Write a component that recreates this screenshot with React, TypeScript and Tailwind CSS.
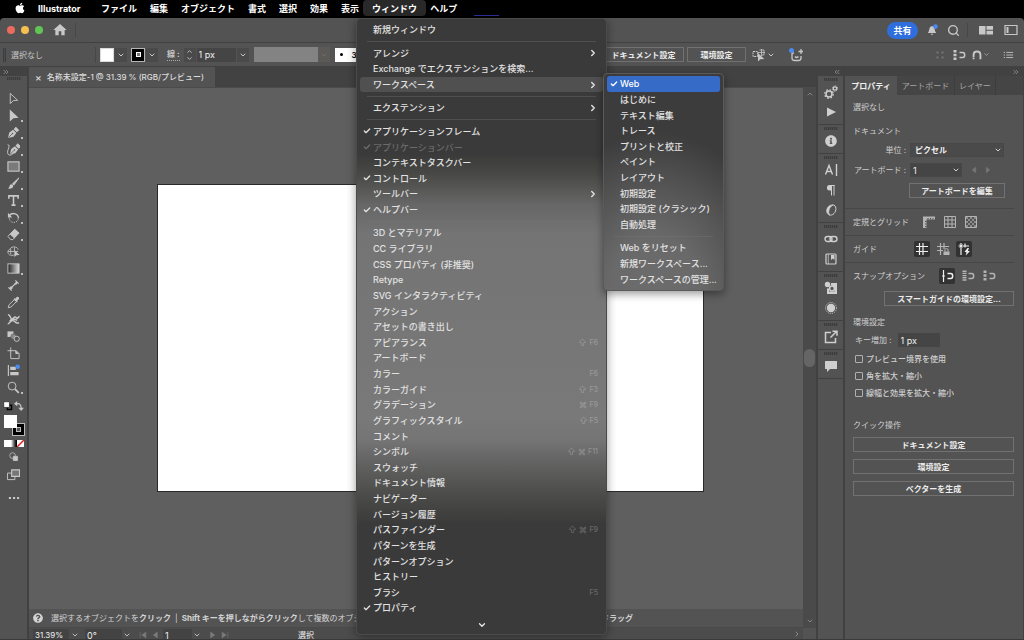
import React from 'react';
import { clsx } from 'clsx';
import {
  ArrowBigUp,
  Check,
  ChevronDown,
  ChevronRight,
  ChevronsLeft,
  ChevronsRight,
  ChevronUp,
  Command,
  Search,
} from 'lucide-react';
import { FaApple, FaInfoCircle, FaQuestionCircle } from 'react-icons/fa';
import { MdHome } from 'react-icons/md';

type MenuEntry = {
  label: string;
  checked?: boolean;
  disabled?: boolean;
  sub?: boolean;
  active?: boolean;
  keys?: string;
};

const menuBarItems = [
  'ファイル',
  '編集',
  'オブジェクト',
  '書式',
  '選択',
  '効果',
  '表示',
  'ウィンドウ',
  'ヘルプ',
];

// null draws a separator
const windowMenu: (MenuEntry | null)[] = [
  { label: '新規ウィンドウ' },
  null,
  { label: 'アレンジ', sub: true },
  { label: 'Exchange でエクステンションを検索...' },
  { label: 'ワークスペース', sub: true, active: true },
  null,
  { label: 'エクステンション', sub: true },
  null,
  { label: 'アプリケーションフレーム', checked: true },
  { label: 'アプリケーションバー', checked: true, disabled: true },
  { label: 'コンテキストタスクバー' },
  { label: 'コントロール', checked: true },
  { label: 'ツールバー', sub: true },
  { label: 'ヘルプバー', checked: true },
  null,
  { label: '3D とマテリアル' },
  { label: 'CC ライブラリ' },
  { label: 'CSS プロパティ (非推奨)' },
  { label: 'Retype' },
  { label: 'SVG インタラクティビティ' },
  { label: 'アクション' },
  { label: 'アセットの書き出し' },
  { label: 'アピアランス', keys: 'S F6' },
  { label: 'アートボード' },
  { label: 'カラー', keys: 'F6' },
  { label: 'カラーガイド', keys: 'S F3' },
  { label: 'グラデーション', keys: 'C F9' },
  { label: 'グラフィックスタイル', keys: 'S F5' },
  { label: 'コメント' },
  { label: 'シンボル', keys: 'S C F11' },
  { label: 'スウォッチ' },
  { label: 'ドキュメント情報' },
  { label: 'ナビゲーター' },
  { label: 'バージョン履歴' },
  { label: 'パスファインダー', keys: 'S C F9' },
  { label: 'パターンを生成' },
  { label: 'パターンオプション' },
  { label: 'ヒストリー' },
  { label: 'ブラシ', keys: 'F5' },
  { label: 'プロパティ', checked: true },
];

const workspaceMenu: (MenuEntry | null)[] = [
  { label: 'Web', checked: true, active: true },
  { label: 'はじめに' },
  { label: 'テキスト編集' },
  { label: 'トレース' },
  { label: 'プリントと校正' },
  { label: 'ペイント' },
  { label: 'レイアウト' },
  { label: '初期設定' },
  { label: '初期設定 (クラシック)' },
  { label: '自動処理' },
  null,
  { label: 'Web をリセット' },
  { label: '新規ワークスペース...' },
  { label: 'ワークスペースの管理...' },
];

interface IconProps {
  children: React.ReactNode;
  className?: string;
}

function Icon({ children, className }: IconProps) {
  return (
    <svg
      viewBox="0 0 14 14"
      fill="none"
      stroke="currentColor"
      className={clsx('shrink-0', className ?? 'size-[14px]')}
      aria-hidden="true"
    >
      {children}
    </svg>
  );
}

const penNib = (
  <>
    <path d="M1 13 2.500 7l4-3L10 7.500l-3 4z" fill="currentColor" stroke="none" />
    <path d="m7.200 3.500 2.300-2.700 3.700 3.700-2.700 2.300z" fill="currentColor" stroke="none" />
    <path d="m1.500 12.500 4-4" stroke="#535353" strokeWidth=".8" />
    <circle cx="6" cy="8" r=".8" fill="#535353" stroke="none" />
  </>
);

const tools: { name: string; more?: boolean; art: React.ReactNode }[] = [
  { name: '選択', art: <path d="M3.500 1.500v11L7 9.200l4.500-.2z" /> },
  {
    name: 'ダイレクト選択',
    more: true,
    art: <path d="M3 .5v13L7 10l5.500-.5z" fill="currentColor" stroke="none" />,
  },
  { name: 'ペン', more: true, art: penNib },
  {
    name: '曲線',
    more: true,
    art: (
      <>
        <g transform="translate(2 -.5)">{penNib}</g>
        <path d="M.6 1.500c2 .5 2 2.500.8 5s-1.200 6 1 6.500 3-.8 4-1.500" />
      </>
    ),
  },
  {
    name: '長方形',
    more: true,
    art: <rect x="1" y="2" width="12" height="10" fill="#7a7a7a" strokeWidth="1.200" />,
  },
  {
    name: 'ブラシ',
    more: true,
    art: (
      <>
        <path d="M12.800 1 6 7.200l1.400 1.500z" fill="currentColor" />
        <path d="M5.500 7.800c-2-.3-2.600 1-2.900 2.400-.2 1-.8 1.800-1.900 2 2.500 1 5.500.5 6.200-2.800z" fill="currentColor" stroke="none" />
      </>
    ),
  },
  {
    name: '文字',
    more: true,
    art: <path d="M2 5V2h10v3M7 2v10M4.800 12h4.400" strokeWidth="1.700" />,
  },
  {
    name: '回転',
    more: true,
    art: (
      <>
        <path d="M2.500 4.800C6 .8 12.500 3 12.300 8" strokeWidth="1.500" />
        <path d="M12 9c-1.400 4.800-9.500 4.500-9.500-1.500" strokeDasharray="1.200 1.200" />
        <path d="M1 2v5h4.600z" fill="currentColor" stroke="none" />
      </>
    ),
  },
  {
    name: '消しゴム',
    more: true,
    art: (
      <>
        <path d="m8.300 1.300 4.700 4.200-5 5.200-4.700-4.200z" fill="currentColor" />
        <path d="M3.300 6.500 1 9l3 3.500h2.300L8 10.700" />
      </>
    ),
  },
  {
    name: 'シェイプ形成',
    art: (
      <>
        <path d="M8 10.500C4 12.500.5 10 1 7c.3-2 2-2 2.500-3 1.500-3 8-2.500 8.500 1M1 7h11M4 4v6M8 2.500V7" strokeWidth=".9" />
        <path d="M8 5.500V13l2-2 3.500-.3z" fill="currentColor" stroke="none" />
      </>
    ),
  },
  {
    name: 'グラデーション',
    more: true,
    art: (
      <>
        <defs>
          <linearGradient id="toolGradient">
            <stop offset="0" stopColor="#222" />
            <stop offset="1" stopColor="#ddd" />
          </linearGradient>
        </defs>
        <rect x="1" y="2" width="12" height="10" fill="url(#toolGradient)" />
      </>
    ),
  },
  {
    name: '寸法',
    art: (
      <>
        <path d="m3.500 10.500 7-7M1.500 9l3.500 3.500M9 1.500 12.500 5" strokeWidth="1.200" />
        <path d="m9 4 1.500 1.500M3.500 8.500 5.500 10.500" strokeWidth="2.500" />
      </>
    ),
  },
  {
    name: 'スポイト',
    art: (
      <>
        <path d="M8 3.800 2.200 9.500l-.9 3.200 3.200-.9L10.200 6" />
        <path d="m7 3.500 3.500 3.500 1-1-.5-.8 1.800-2c.9-1.400-.9-3-2.200-2.100L8.800 2.900 8 2.500z" fill="currentColor" stroke="none" />
      </>
    ),
  },
  {
    name: 'パペットワープ',
    art: (
      <>
        <path d="M1 2c3-.5 2.500 5 4.500 4.500S8 3 10 5s2-1 3.500-1.500" strokeWidth="1.600" />
        <path d="M.8 11.500C3 12 3 8 6 8s2.500 4 7 2.500M3 9c1-2.500 5-3 8-1" strokeWidth="1.600" />
      </>
    ),
  },
  {
    name: 'ブレンド',
    art: (
      <>
        <path d="M.5 1.500h6.500v6H.5z" fill="currentColor" stroke="none" />
        <circle cx="7" cy="7" r="2.800" fill="#8d8d8d" stroke="#6b6b6b" />
        <circle cx="10.500" cy="9.500" r="2.800" fill="#535353" />
      </>
    ),
  },
  {
    name: 'アートボード',
    art: (
      <>
        <path d="M4 .5v12h9V7l-3-3H.5" />
        <path d="M9.500 4v3h3" fill="currentColor" />
      </>
    ),
  },
  {
    name: '整列',
    art: (
      <>
        <path d="M1.500 1v12" strokeWidth="1.200" />
        <path d="M3.500 3h6v3.500h-6zM3.500 8.500h9V12h-9z" fill="currentColor" stroke="none" />
        <circle cx="11.500" cy="3" r="2.500" fill="#4a8af0" stroke="none" />
      </>
    ),
  },
  {
    name: 'ズーム',
    more: true,
    art: (
      <>
        <circle cx="5.500" cy="5.500" r="4.200" />
        <path d="m8.700 8.700 4 4" strokeWidth="1.800" />
      </>
    ),
  },
];

const snapHook = (
  <path d="M7.500 4.500h3.300c2.500 0 2.500 5 0 5H7.500" strokeWidth="1.500" />
);

const dockGroups: { name: string; art: React.ReactNode }[][] = [
  [
    {
      name: 'CSS プロパティ',
      art: (
        <>
          <circle cx="5" cy="9" r="3" strokeWidth="1.500" />
          <circle cx="5" cy="9" r="4.300" strokeWidth="1.200" strokeDasharray="1.700 1.680" />
          <circle cx="11" cy="3.500" r="1.700" strokeWidth="1.200" />
          <circle cx="11" cy="3.500" r="2.600" strokeDasharray="1 1.040" />
        </>
      ),
    },
    { name: 'アクション', art: <path d="m3 2.500 9 4.500-9 4.500z" fill="currentColor" stroke="none" /> },
  ],
  [{ name: '情報', art: <FaInfoCircle size={12} x={1} y={1} stroke="none" /> }],
  [
    {
      name: '文字',
      art: <path d="M1.500 11.500 5 2.500l3.500 9M2.800 8.500h4.500M12.500 1v12" strokeWidth="1.400" />,
    },
    {
      name: '段落',
      art: (
        <>
          <path d="M8 2H5.500C2 2 2 7.500 5.500 7.500H8z" fill="currentColor" stroke="none" />
          <path d="M7.500 2v10.500M10 2v10.500M7 2.500h3.500" />
        </>
      ),
    },
    {
      name: 'OpenType',
      art: (
        <>
          <path d="M9 2C4 1 1 7.500 3.500 10.500 4.500 12 5.500 12 6 12 3.500 10 5 4 9 2z" fill="currentColor" strokeWidth=".6" />
          <path d="M8.500 1.800C13 2 12.500 8 10 10.500 8.500 12.200 6.500 12.300 5 11.800" />
        </>
      ),
    },
  ],
  [
    {
      name: 'リンク',
      art: (
        <>
          <rect x="1" y="4.500" width="7" height="5" rx="2.500" strokeWidth="1.400" />
          <rect x="6" y="4.500" width="7" height="5" rx="2.500" strokeWidth="1.400" />
        </>
      ),
    },
    {
      name: 'ライブラリ',
      art: (
        <>
          <rect x="2" y="2" width="10" height="10" rx="1" strokeWidth="1.200" />
          <path d="M4.300 2v10" strokeWidth=".7" />
          <path d="M7 3h3.500v5L8.800 6.500 7 8z" fill="currentColor" stroke="none" />
        </>
      ),
    },
  ],
  [
    {
      name: 'シンボル',
      art: (
        <>
          <path d="M7 2h6v11H3V7.500h2v3h5.500V6H8.500V4.500H7z" fill="currentColor" stroke="none" />
          <circle cx="8" cy="7.500" r="2.400" strokeWidth="1.500" />
          <circle cx="3.500" cy="3.500" r="2.700" fill="currentColor" stroke="none" />
        </>
      ),
    },
    {
      name: 'アピアランス',
      art: (
        <>
          <circle cx="7" cy="7" r="4.200" fill="currentColor" stroke="none" />
          <circle cx="7" cy="7" r="5.500" strokeDasharray="1 1.160" />
        </>
      ),
    },
  ],
  [
    {
      name: 'アセットの書き出し',
      art: (
        <>
          <path d="M7 2.500H1.500v10h10V8" strokeWidth="1.500" />
          <path d="m6.500 7.500 6-6M8.500 1.200H13v4.500" strokeWidth="1.500" />
        </>
      ),
    },
  ],
  [
    {
      name: 'コメント',
      art: <path d="M1.500 2h11q.5 0 .5.500v7q0 .5-.5.500H6l-3 3v-3H1.500Q1 10 1 9.500v-7Q1 2 1.500 2z" fill="currentColor" stroke="none" />,
    },
  ],
];

function Shortcut({ keys }: { keys: string }) {
  return (
    <span className="ml-auto flex items-center gap-[2px] text-[7px] text-white/25">
      {keys.split(' ').map((key) => {
        if (key === 'S') return <ArrowBigUp key={key} size={9} />;
        if (key === 'C') return <Command key={key} size={8} />;
        return <span key={key}>{key}</span>;
      })}
    </span>
  );
}

interface MenuListProps {
  items: (MenuEntry | null)[];
  activeClass: string;
}

function MenuList({ items, activeClass }: MenuListProps) {
  return (
    <ul className="flex min-h-0 flex-1 flex-col">
      {items.map((item, index) =>
        item ? (
          <li key={item.label} className="flex min-h-0 flex-[2] px-[3px]">
            <button
              type="button"
              disabled={item.disabled}
              className={clsx(
                'flex w-full items-center rounded-[3px] pr-[5px] pl-[3px] text-[9px] leading-none font-medium whitespace-nowrap',
                item.disabled ? 'text-white/25' : 'text-[#e2e2e2]',
                item.active && activeClass,
              )}
            >
              <span className="flex w-[10px] shrink-0">
                {item.checked && <Check size={8} strokeWidth={4} />}
              </span>
              {item.label}
              {item.sub && (
                <ChevronRight size={10} strokeWidth={3.5} className="ml-auto" />
              )}
              {item.keys && <Shortcut keys={item.keys} />}
            </button>
          </li>
        ) : (
          <li
            key={`separator-${index}`}
            className="mx-[10px] flex min-h-0 flex-1 items-center"
          >
            <hr className="w-full border-[#787878]/35" />
          </li>
        ),
      )}
    </ul>
  );
}

function Gripper({ className }: { className?: string }) {
  return (
    <span
      className={clsx(
        'block shrink-0 bg-[repeating-linear-gradient(90deg,#3d3d3d_0_1px,#4b4b4b_1px_2px)]',
        className,
      )}
    />
  );
}

function MenuBar() {
  return (
    <nav className="flex h-[18px] shrink-0 items-stretch gap-[13px] bg-black pb-[2px] pl-[14px] text-[9px] leading-none font-semibold text-white">
      <button type="button" aria-label="Apple" className="mr-[-1px]">
        <FaApple size={12} />
      </button>
      <button type="button" className="mr-[4px] w-[46px] text-left font-bold">
        Illustrator
      </button>
      {menuBarItems.map((item) => (
        <button
          type="button"
          key={item}
          className={clsx(
            'whitespace-nowrap',
            item === 'ウィンドウ' && '-mx-[9px] rounded-[4px] bg-[#292929] px-[9px]',
          )}
        >
          {item}
        </button>
      ))}
      <span className="ml-[4px] h-px w-[25px] self-end bg-[#3030a0]" />
    </nav>
  );
}

function TitleBar() {
  return (
    <header className="flex h-[25px] shrink-0 items-center rounded-t-[4px] border-b border-[#414141] bg-[#535353] pr-[6px] pl-[7px] text-[#c8c8c8]">
      <div className="flex gap-[6px]">
        <span className="size-[8px] rounded-full bg-[#ec6a5e]" />
        <span className="size-[8px] rounded-full bg-[#f4bf4f]" />
        <span className="size-[8px] rounded-full bg-[#61c554]" />
      </div>
      <button type="button" aria-label="ホーム" className="ml-[9px]">
        <MdHome size={16} />
      </button>
      <span className="ml-[7px] h-[14px] w-px bg-[#474747]" />
      <div className="ml-auto flex items-center">
        <button
          type="button"
          className="mr-[8px] h-[17px] w-[31px] rounded-full bg-[#2f6fdd] text-[9px] leading-none font-bold text-white"
        >
          共有
        </button>
        <button type="button" aria-label="通知">
          <Icon className="size-[12px]">
            <path d="M2 10.500c1.500-1.500 1.500-3 2-5C4.500 3 6 2.500 7 2.500s2.500.5 3 3c.5 2 .5 3.500 2 5zM5.500 11.500h3L7 13z" fill="currentColor" stroke="none" />
            <circle cx="11" cy="3" r="2.700" fill="#4a8af0" stroke="none" />
          </Icon>
        </button>
        <button type="button" aria-label="検索" className="ml-[9px]">
          <Search size={13} strokeWidth={2.5} />
        </button>
        <span className="mx-[7px] h-[14px] w-px bg-[#474747]" />
        <button type="button" aria-label="ドキュメントレイアウト" className="ml-[4px]">
          <Icon>
            <path d="M0 3h6.500v8.500H0zM7.500 3H14v3.700H7.500zM7.500 7.700H14v3.800H7.500z" fill="currentColor" stroke="none" />
          </Icon>
        </button>
        <button type="button" aria-label="ワークスペース" className="ml-[11px]">
          <Icon>
            <path d="M1 2.500h12v9H1z" strokeWidth="1.200" />
            <path d="M2.500 4h2v6h-2z" fill="currentColor" stroke="none" />
          </Icon>
        </button>
      </div>
    </header>
  );
}

const outlineButton =
  'border border-[#717171] text-[8px] leading-none font-semibold text-[#ececec] whitespace-nowrap';

function ControlBar() {
  return (
    <div className="flex h-[24px] shrink-0 items-center border-b border-[#414141] bg-[#535353] pl-[3px] text-[8px] text-[#c8c8c8]">
      <div className="flex w-[600px] shrink-0 items-center overflow-hidden">
        <Gripper className="h-[14px] w-[3px]" />
        <span className="ml-[5px] w-[84px]">選択なし</span>
        <span className="mr-[4px] h-[16px] w-px bg-[#474747]" />
        <button type="button" aria-label="塗り" className="size-[14px] border border-[#d9d9d9] bg-white" />
        <button type="button" aria-label="塗りを選択" className="ml-px flex h-[14px] w-[12px] items-center justify-center bg-[#4a4a4a]">
          <ChevronDown size={8} strokeWidth={3} />
        </button>
        <button type="button" aria-label="線" className="ml-[4px] flex size-[14px] items-center justify-center border border-[#b5b5b5] bg-black">
          <span className="size-[5px] border border-white bg-[#777]" />
        </button>
        <button type="button" aria-label="線を選択" className="ml-px flex h-[14px] w-[12px] items-center justify-center bg-[#4a4a4a]">
          <ChevronDown size={8} strokeWidth={3} />
        </button>
        <label htmlFor="stroke-width" className="ml-[9px] border-b border-dotted border-[#aaa] font-semibold whitespace-nowrap">
          線 :
        </label>
        <span className="ml-[4px] flex h-[14px] w-[12px] flex-col items-center justify-center bg-[#4a4a4a]">
          <ChevronUp size={7} strokeWidth={3} />
          <ChevronDown size={7} strokeWidth={3} />
        </span>
        <input
          id="stroke-width"
          defaultValue="1 px"
          className="ml-px h-[14px] w-[39px] bg-[#454545] pl-[2px] text-[9px] text-[#f0f0f0]"
        />
        <span className="ml-px flex h-[14px] w-[12px] items-center justify-center bg-[#4a4a4a]">
          <ChevronDown size={8} strokeWidth={3} />
        </span>
        <span className="ml-[5px] h-[15px] w-[64px] bg-[#838383]" />
        <span className="flex h-[15px] w-[12px] items-center justify-center bg-[#5c5a57] text-[#777]">
          <ChevronDown size={8} />
        </span>
        <span className="ml-[5px] flex h-[14px] w-[60px] items-center gap-[9px] bg-white pl-[5px] font-semibold text-black">
          <span className="size-[3px] rounded-full bg-black" />3
        </span>
      </div>
      <button type="button" className={clsx(outlineButton, 'h-[15px] w-[81px]')}>
        ドキュメント設定
      </button>
      <button type="button" className={clsx(outlineButton, 'ml-[3px] h-[15px] w-[59px]')}>
        環境設定
      </button>
      <Icon className="ml-[6px] size-[14px]">
        <path d="M1 3.500h4.500v5H1z" strokeDasharray="2 .7" />
        <path d="M7.500 2H12v5H9M9.500 1v7M6 4.500h7" strokeWidth=".8" />
        <path d="M6 5v8.500l2.300-2.200 4-.3z" fill="currentColor" stroke="none" />
      </Icon>
      <ChevronDown size={8} strokeWidth={3} className="ml-px" />
      <Icon className="ml-[14px] size-[14px]">
        <path d="M5 5H3v5q0 2.500 2.500 2.500h4Q12 12.500 12 10V8M6 8.500q1.500 2 3.500 0M12 1v5M9.500 3.500h4.500" strokeWidth="1.300" />
        <circle cx="2.500" cy="2.500" r="2.500" fill="#4a8af0" stroke="none" />
      </Icon>
      <div className="ml-auto flex items-center pr-[10px]">
        <Icon className="mr-[5px] size-[14px] text-[#777]">
          <path d="M3 3h3v3H3zM8 3h3v3H8zM3 8h3v3H3zM8 8h3v3H8z" fill="currentColor" stroke="#535353" />
        </Icon>
        <Icon className="size-[14px]">
          <path d="M3 2v10" strokeWidth="3" strokeDasharray="2.500 1.200" />
          {snapHook}
        </Icon>
        <Icon className="ml-[5px] size-[12px]">
          <path d="M3 12V7c0-5.500 8-5.500 8 0v5" strokeWidth="2.200" strokeDasharray="2.200 .6 20" />
        </Icon>
        <ChevronDown size={7} strokeWidth={2} />
        <Icon className="ml-[12px] size-[12px]">
          <path d="M2 4h1.500M5 4h8M2 7h1.500M5 7h8M2 10h1.500M5 10h8" />
        </Icon>
      </div>
    </div>
  );
}

function Toolbar() {
  return (
    <aside className="flex w-[29px] shrink-0 flex-col border-r-2 border-[#414141] bg-[#535353] text-[#c8c8c8]">
      <div className="flex h-[9px] items-center bg-[#424242] pl-[2px] text-[#a0a0a0]">
        <ChevronsRight size={8} />
      </div>
      <Gripper className="mx-auto mt-px mb-[10px] h-[3px] w-[14px]" />
      <div className="flex flex-col items-center">
        {tools.map((tool) => (
          <button
            type="button"
            key={tool.name}
            aria-label={tool.name}
            className="relative flex h-[17px] w-[19px] items-center justify-center"
          >
            <Icon className="size-[13px]">{tool.art}</Icon>
            {tool.more && (
              <span className="absolute right-0 bottom-[2px] size-[2px] bg-[#bdbdbd]" />
            )}
          </button>
        ))}
      </div>
      <div className="mt-[5px] flex items-center justify-between px-[3px]">
        <Icon className="size-[10px]">
          <path d="M6 6h6v6H6z" strokeWidth="2" stroke="#000" />
          <path d="M1 1h8v8H1z" fill="#fff" stroke="#222" />
        </Icon>
        <Icon className="size-[10px]">
          <path d="M3 4c5-1 7 1 7 6" strokeWidth="1.800" />
          <path d="M4.500 0v7.500L0 4zM6 9.500h8L10 14z" fill="currentColor" stroke="none" />
        </Icon>
      </div>
      <div className="relative mt-[4px] ml-[4px] h-[21px] w-[21px]">
        <div className="absolute right-0 bottom-0 size-[13px] border border-[#b9b9b9] bg-black p-[3px]">
          <div className="size-full border border-[#b9b9b9] bg-[#535353]" />
        </div>
        <div className="absolute top-0 left-0 size-[13px] bg-white" />
      </div>
      <div className="mt-[4px] ml-[4px] flex">
        <span className="size-[7px] bg-white" />
        <span className="h-[7px] w-[6px] bg-linear-to-r from-white to-black" />
        <Icon className="size-[7px]">
          <path d="M0 0h14v14H0z" fill="#fff" stroke="none" />
          <path d="M0 14 14 0" stroke="#e02020" strokeWidth="3" />
        </Icon>
      </div>
      <div className="mt-[5px] flex flex-col items-center gap-[6px]">
        <Icon className="size-[10px]">
          <circle cx="5" cy="5" r="4" />
          <path d="M6 6h6v6H6z" fill="currentColor" />
        </Icon>
        <Icon className="size-[13px]">
          <path d="M.5 5.500h8v7h-8z" />
          <path d="M5 2h8.500v7H5z" fill="#777" strokeWidth="1.200" />
        </Icon>
        <Icon className="mt-[5px] size-[12px]">
          <path d="M1 7h2.500M5.800 7h2.500M10.500 7H13" strokeWidth="2.500" />
        </Icon>
      </div>
    </aside>
  );
}

function StatusBar() {
  return (
    <footer className="flex h-[12px] shrink-0 items-center overflow-hidden border-t border-[#4a4a4a] bg-[#4c4c4c] pl-[4px] text-[9px] leading-none text-[#f0f0f0]">
      <input aria-label="ズーム" defaultValue="31.39%" className="mt-[3px] h-[12px] w-[36px] bg-[#434343] pl-[2px] text-[8px]" />
      <ChevronDown size={8} strokeWidth={3} className="mx-[2px] mt-[3px] text-[#bbb]" />
      <input aria-label="回転" defaultValue="0°" className="mt-[3px] ml-[4px] h-[12px] w-[37px] bg-[#434343] pl-[2px] text-[9px]" />
      <ChevronDown size={8} strokeWidth={3} className="mx-px mt-[3px] text-[#bbb]" />
      <Icon className="mt-[2px] ml-[7px] size-[8px] text-[#7c7c7c]">
        <path d="M2 2v10M12 2v10L5 7z" fill="currentColor" />
      </Icon>
      <Icon className="mt-[2px] ml-[4px] size-[8px] text-[#7c7c7c]">
        <path d="M11 2v10L4 7z" fill="currentColor" />
      </Icon>
      <input aria-label="アートボード番号" defaultValue="1" className="mt-[3px] ml-[4px] h-[12px] w-[29px] bg-[#434343] pl-[2px] text-[9px]" />
      <ChevronDown size={8} strokeWidth={3} className="mx-px mt-[3px] text-[#bbb]" />
      <Icon className="mt-[2px] ml-[7px] size-[8px] text-[#7c7c7c]">
        <path d="M3 2v10l7-5z" fill="currentColor" />
      </Icon>
      <Icon className="mt-[2px] ml-[4px] size-[8px] text-[#7c7c7c]">
        <path d="M12 2v10M2 2v10l7-5z" fill="currentColor" />
      </Icon>
      <span className="mt-[2px] ml-[69px] text-[8px]">選択</span>
      <ChevronRight size={8} className="ml-auto text-[#aaa]" />
      <span className="ml-[2px] h-full w-[13px] bg-[#535353]" />
    </footer>
  );
}

function Workspace() {
  return (
    <main className="flex min-w-0 flex-1 flex-col">
      <div className="flex h-[21px] shrink-0 border-b border-[#4b4b4b] bg-[#424242]">
        <div className="flex w-[186px] items-center bg-[#535353] pl-[6px] text-[8px] font-medium whitespace-nowrap text-[#dcdcdc]">
          <button type="button" aria-label="閉じる" className="mr-[5px] text-[10px]">
            ×
          </button>
          名称未設定-1 @ 31.39 % (RGB/プレビュー)
        </div>
      </div>
      <div className="flex min-h-0 flex-1">
        <div className="flex min-w-0 flex-1 flex-col">
          <div className="relative min-h-0 flex-1 overflow-hidden bg-[#5f5f5f]">
            <div className="absolute top-[96px] left-[128px] h-[308px] w-[547px] border border-[#2a2a2a] bg-white" />
          </div>
          <div className="flex h-[18px] shrink-0 items-center overflow-hidden bg-[#535353] pl-[4px] text-[8px] whitespace-nowrap text-[#d4d4d4]">
            <FaQuestionCircle size={10} className="shrink-0" />
            <p className="ml-[8px] w-[550px] shrink-0 overflow-hidden">
              選択するオブジェクトを<b>クリック</b>
              <span className="mx-[4px]">|</span>
              <b>Shift キーを押しながらクリック</b>して複数のオブジェクトを選択
            </p>
            <b>ドラッグ</b>
          </div>
        </div>
        <div className="flex w-[13px] shrink-0 flex-col items-center justify-between bg-[#4a4a4a] py-[2px] text-[#a0a0a0]">
          <ChevronUp size={8} />
          <span className="h-[18px] w-[11px] rounded-full bg-[#656565]" />
          <ChevronDown size={8} />
        </div>
      </div>
      <StatusBar />
    </main>
  );
}

function Dock() {
  return (
    <div className="flex w-[29px] shrink-0 flex-col border-x-2 border-[#414141] bg-[#535353] text-[#cfcfcf]">
      <div className="flex h-[9px] items-center justify-end bg-[#424242] pr-[2px] text-[#a0a0a0]">
        <ChevronsLeft size={8} />
      </div>
      {dockGroups.map((group) => (
        <div key={group[0].name} className="flex flex-col items-center border-b border-[#414141] pb-[2px]">
          <Gripper className="mt-[2px] mb-px h-[3px] w-[14px]" />
          {group.map((item) => (
            <button type="button" key={item.name} aria-label={item.name} className="flex h-[20px] items-center">
              <Icon>{item.art}</Icon>
            </button>
          ))}
        </div>
      ))}
    </div>
  );
}

interface IconToggleProps {
  label: string;
  on?: boolean;
  children: React.ReactNode;
}

function IconToggle({ label, on, children }: IconToggleProps) {
  return (
    <button
      type="button"
      aria-label={label}
      className={clsx(
        'mr-[5px] flex size-[16px] items-center justify-center rounded-[2px]',
        on ? 'bg-[#323232] text-[#f0f0f0]' : 'text-[#b4b4b4]',
      )}
    >
      <Icon>{children}</Icon>
    </button>
  );
}

function PropertiesPanel() {
  return (
    <aside className="flex w-[179px] shrink-0 flex-col border-r border-[#414141] bg-[#535353] text-[8px] leading-[12px] text-[#cfcfcf]">
      <div className="flex h-[9px] shrink-0 items-center justify-end bg-[#424242] pr-[3px] text-[#a0a0a0]">
        <ChevronsRight size={8} />
      </div>
      <div className="flex h-[19px] shrink-0 bg-[#454545] text-[#a6a6a6]">
        <button type="button" className="w-[52px] bg-[#535353] font-semibold text-[#f0f0f0]">
          プロパティ
        </button>
        <button type="button" className="w-[58px] border-r border-[#3d3d3d]">
          アートボード
        </button>
        <button type="button" className="w-[41px] border-r border-[#3d3d3d]">
          レイヤー
        </button>
      </div>
      <div className="flex flex-col pr-[9px] pl-[8px]">
        <p className="mt-[6px]">選択なし</p>
        <h3 className="mt-[12px]">ドキュメント</h3>
        <div className="mt-[6px] flex items-center">
          <label htmlFor="unit" className="w-[53px] text-right">
            単位 :
          </label>
          <div className="relative ml-[4px]">
            <select
              id="unit"
              className="block h-[14px] w-[94px] appearance-none border border-[#474747] bg-[#4a4a4a] pl-[4px] text-[8px] leading-none font-semibold text-[#f0f0f0]"
            >
              <option>ピクセル</option>
            </select>
            <ChevronDown size={8} strokeWidth={3} className="pointer-events-none absolute top-[3px] right-[2px]" />
          </div>
        </div>
        <div className="mt-[6px] flex items-center">
          <label htmlFor="artboard" className="-ml-[4px] w-[57px] text-right whitespace-nowrap">
            アートボード :
          </label>
          <div className="relative ml-[4px]">
            <select
              id="artboard"
              className="block h-[14px] w-[52px] appearance-none border border-[#474747] bg-[#454545] pl-[2px] text-[9px] leading-none text-[#f0f0f0]"
            >
              <option>1</option>
            </select>
            <ChevronDown size={8} strokeWidth={3} className="pointer-events-none absolute top-[3px] right-[2px]" />
          </div>
          <Icon className="ml-[8px] size-[8px] text-[#777]">
            <path d="M10 2v10L4 7z" fill="currentColor" />
          </Icon>
          <Icon className="ml-[6px] size-[8px] text-[#777]">
            <path d="M4 2v10l6-5z" fill="currentColor" />
          </Icon>
        </div>
        <button type="button" className={clsx(outlineButton, 'mt-[6px] ml-[56px] h-[15px] w-[96px]')}>
          アートボードを編集
        </button>
        <div className="mt-[10px] -ml-[8px] flex h-[27px] items-center border-t border-[#474747] pl-[8px]">
          <span className="w-[68px]">定規とグリッド</span>
          <IconToggle label="定規">
            <path d="M1 1.500h12v3H4.500V13H1z" fill="currentColor" stroke="none" />
            <path d="M6 3v1.500M8.500 3v1.500M11 3v1.500M3 6.500h1.500M3 9h1.500M3 11.500h1.500" stroke="#535353" />
          </IconToggle>
          <IconToggle label="グリッド">
            <path d="M1.500 1.500h11v11h-11zM5 1.500v11M9 1.500v11M1.500 5h11M1.500 9h11" />
          </IconToggle>
          <IconToggle label="透明グリッド">
            <path d="M1.500 1.500h11v11h-11z" />
            <path d="M2 3h10M2 7h10M2 11h10" strokeWidth="2" strokeDasharray="2 2" strokeOpacity=".6" />
            <path d="M4 5h8M4 9h8" strokeWidth="2" strokeDasharray="2 2" strokeOpacity=".6" />
          </IconToggle>
        </div>
        <div className="-ml-[8px] flex h-[27px] items-center border-t border-[#474747] pl-[8px]">
          <span className="w-[61px]">ガイド</span>
          <IconToggle label="ガイドを表示" on>
            <path d="M4.500 1v12M8 1v12M1 4.500h12M1 9.500h12" strokeWidth="1.200" />
          </IconToggle>
          <IconToggle label="ガイドをロック">
            <path d="M4.500 1v12M8 1v6M1 4.500h12M1 8.500h6" strokeWidth="1.200" />
            <path d="M7.500 9.500h6V13h-6z" fill="currentColor" stroke="none" />
            <path d="M9 9.500v-2c0-1.300 3-1.300 3 0v2" />
          </IconToggle>
          <IconToggle label="スマートガイド" on>
            <path d="M4 1v12M8 1.500v4M1.500 4H12" strokeWidth="1.200" />
            <path d="m2.500 2.500 3 3M5.500 2.500l-3 3" strokeWidth=".8" />
            <path d="M10.500 6 7.500 10h2l-.7 3.500L13 9h-2.200L12 6z" fill="currentColor" stroke="none" />
          </IconToggle>
        </div>
        <div className="-ml-[8px] flex h-[27px] items-center border-t border-[#474747] pl-[8px]">
          <span className="w-[86px]">スナップオプション</span>
          <IconToggle label="ポイントにスナップ" on>
            <path d="M3.500 1v12M2 7h3" strokeWidth="1.200" />
            {snapHook}
          </IconToggle>
          <IconToggle label="グリッドにスナップ">
            <path d="M3.500 1.500v11" strokeWidth="4" strokeDasharray="1.400 .8" />
            {snapHook}
          </IconToggle>
          <IconToggle label="ピクセルにスナップ">
            <path d="M3 1.500v11" strokeWidth="3" strokeDasharray="2.500 1.200" />
            {snapHook}
          </IconToggle>
        </div>
        <button type="button" className={clsx(outlineButton, 'mt-[2px] h-[15px] w-[130px] self-end')}>
          スマートガイドの環境設定...
        </button>
        <h3 className="mt-[10px]">環境設定</h3>
        <div className="mt-[5px] ml-[2px] flex items-center">
          <label htmlFor="key-step">キー増加 :</label>
          <input
            id="key-step"
            defaultValue="1 px"
            className="ml-[6px] h-[14px] w-[42px] bg-[#454545] pl-[3px] text-[9px] text-[#f0f0f0]"
          />
        </div>
        <div className="mt-[6px] ml-[2px] flex flex-col gap-[5px]">
          {['プレビュー境界を使用', '角を拡大・縮小', '線幅と効果を拡大・縮小'].map((label) => (
            <label key={label} className="flex items-center gap-[3px] font-medium">
              <input
                type="checkbox"
                className="size-[8px] appearance-none rounded-[1px] border border-[#b0b0b0] checked:bg-[#b0b0b0]"
              />
              {label}
            </label>
          ))}
        </div>
        <h3 className="mt-[20px] mb-[6px]">クイック操作</h3>
        <div className="flex flex-col gap-[7px]">
          {['ドキュメント設定', '環境設定', 'ベクターを生成'].map((label) => (
            <button type="button" key={label} className={clsx(outlineButton, 'h-[15px]')}>
              {label}
            </button>
          ))}
        </div>
      </div>
    </aside>
  );
}

function App() {
  return (
    <div className="relative flex h-screen flex-col overflow-hidden bg-black font-['Inter','Noto_Sans_CJK_JP',sans-serif]">
      <MenuBar />
      <TitleBar />
      <ControlBar />
      <div className="flex min-h-0 flex-1 border-b border-[#3a3a3a]">
        <Toolbar />
        <Workspace />
        <Dock />
        <PropertiesPanel />
      </div>

      {/* Window menu */}
      <div className="absolute top-[18px] bottom-[5px] left-[356px] flex w-[251px] flex-col rounded-[5px] border border-[#4b4b4b] bg-[linear-gradient(#3a3a3a_0,#3a3a3a_135px,#484846_155px,#666_185px,#747474_215px,#797979_400px,#747474_422px,#656565_440px,#4a4a48_478px,#3a3a3a_505px)] pt-[3px] shadow-[0_2px_10px_rgba(0,0,0,0.4)]">
        <MenuList items={windowMenu} activeClass="bg-[#505050]" />
        <div className="flex h-[18px] shrink-0 items-center justify-center text-[#eee]">
          <ChevronDown size={10} strokeWidth={3} />
        </div>
      </div>

      {/* Workspace submenu */}
      <div className="absolute top-[73px] left-[603px] flex h-[218px] w-[121px] flex-col rounded-[4px] border border-[#5a5a5a] bg-[#3c3c3c] bg-[radial-gradient(ellipse_130px_160px_at_50px_218px,#6c6c6c_0,#696969_35%,#525252_70%,#3c3c3c_100%)] pt-[2px] pb-[3px] shadow-[0_3px_9px_rgba(0,0,0,0.4)]">
        <MenuList items={workspaceMenu} activeClass="bg-[#366cc8] text-white" />
      </div>
    </div>
  );
}

export default App;
